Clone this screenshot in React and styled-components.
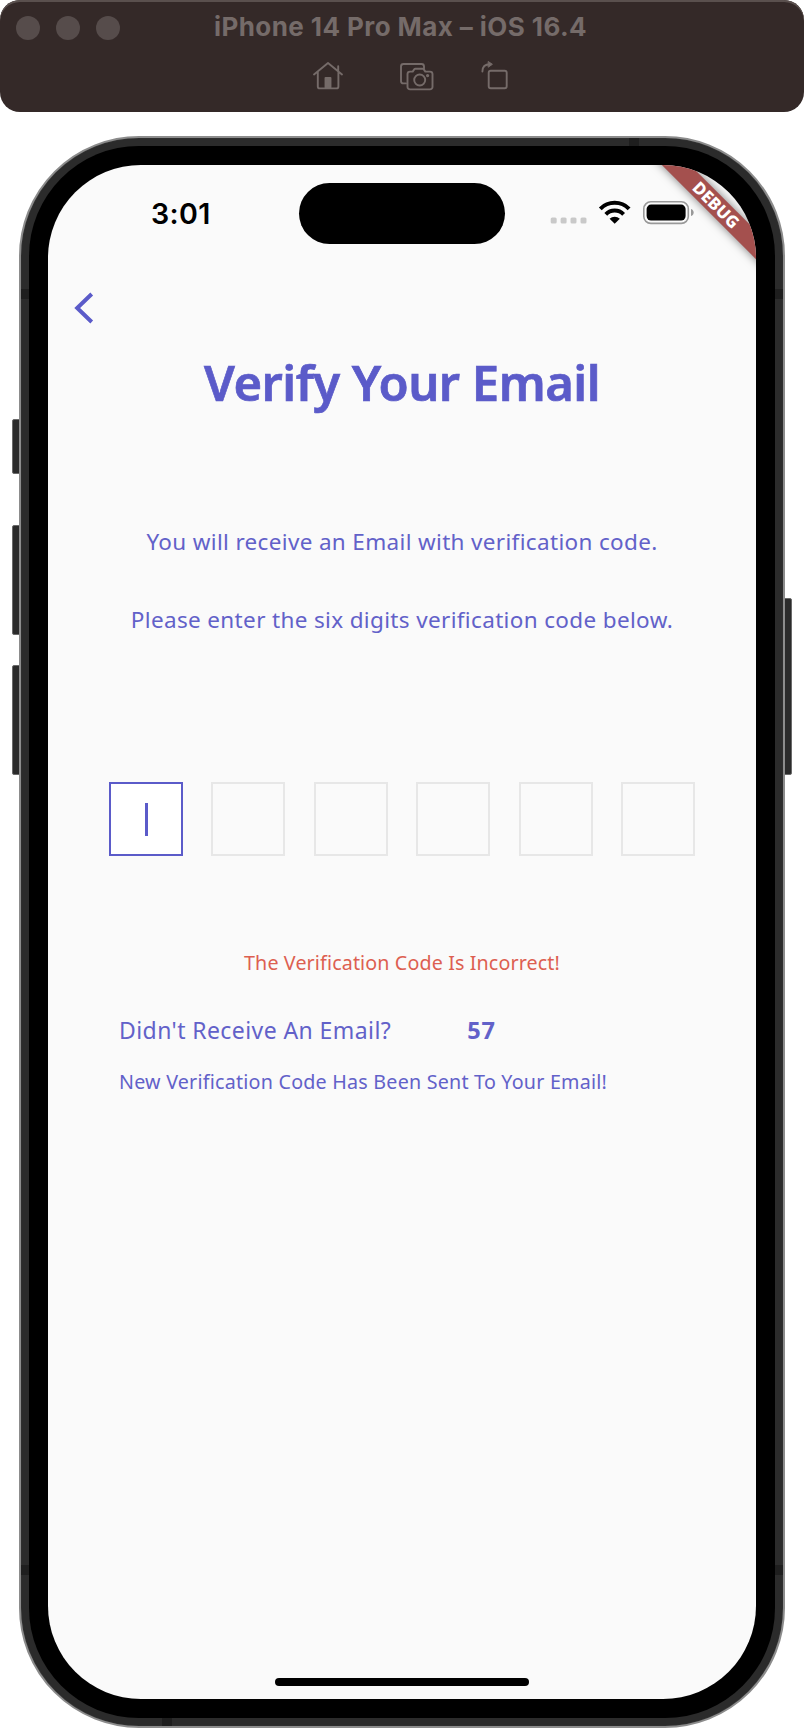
import React from "react";
import styled, { createGlobalStyle } from "styled-components";

const INK = "#5b5bc9";

const Global = createGlobalStyle`
  * { box-sizing: border-box; }
  body { margin: 0; background: #fff; }
`;

const Page = styled.div`
  width: 804px;
  height: 1732px;
  overflow: hidden;
  background: #fff;
`;

const WindowBar = styled.header`
  height: 112px;
  border-radius: 20px;
  background: #342928;
  box-shadow: inset 0 2px 0 #5a504e;
`;

const TitleRow = styled.div`
  display: grid;
  grid-template-columns: 198px 1fr 198px;
  align-items: center;
  height: 56px;
`;

const Lights = styled.div`
  display: flex;
  gap: 16px;
  padding-left: 16px;
`;

const Light = styled.span`
  width: 24px;
  height: 24px;
  border-radius: 50%;
  background: #564c4b;
`;

const WindowTitle = styled.div`
  height: 56px;
  padding-right: 3px;
  font: 700 26px/54px Inter, sans-serif;
  letter-spacing: 0.42px;
  text-align: center;
  white-space: nowrap;
  color: #756b69;
`;

const Tools = styled.div`
  display: flex;
  padding: 4px 0 0 312px;
`;

const ToolIcon = styled.svg`
  width: ${(p) => p.$w}px;
  height: 32px;
  margin-right: ${(p) => p.$after || 0}px;
  fill: none;
  stroke: #756b69;
  stroke-width: 1.9;
  stroke-linecap: round;
  stroke-linejoin: round;
`;

const Device = styled.main`
  position: relative;
  width: 766px;
  height: 1592px;
  margin: 24px auto 0;
`;

const SideButton = styled.span`
  position: absolute;
  top: ${(p) => p.$top}px;
  ${(p) => p.$side}: -7px;
  width: 9px;
  height: ${(p) => p.$height}px;
  border: 1px solid #6a6a6a;
  border-radius: 2px;
  background: #2b2b2b;
`;

const Frame = styled.div`
  position: relative;
  height: 1592px;
  padding: 8px;
  border: 2px solid #8c8c8c;
  border-radius: 120px;
  background: #2b2b2b;
  box-shadow: inset 0 0 1px #555;
`;

const Antenna = styled.span`
  position: absolute;
  left: ${(p) => p.$x}px;
  top: ${(p) => p.$y}px;
  width: 10px;
  height: 8px;
  background: #1e1e1e;
  ${(p) => p.$upright && "width: 8px; height: 10px;"}
`;

const Bezel = styled.div`
  height: 1572px;
  padding: 19px;
  border-radius: 110px;
  background: #000;
`;

const Screen = styled.div`
  position: relative;
  display: flex;
  flex-direction: column;
  height: 1534px;
  overflow: hidden;
  border-radius: 93px;
  background: #fafafa;
`;

const StatusBar = styled.div`
  display: flex;
  align-items: flex-start;
  height: 79px;
  padding-top: 18px;
`;

const Clock = styled.time`
  width: 251px;
  padding-left: 103px;
  font: 600 28.6px/61px Inter, sans-serif;
  letter-spacing: 0.4px;
  color: #000;
`;

const Island = styled.div`
  width: 206px;
  height: 61px;
  border-radius: 31px;
  background: #000;
`;

const StatusIcons = styled.svg`
  width: 150px;
  height: 30px;
  margin: 16px 0 0 42px;
`;

const Ribbon = styled.div`
  position: absolute;
  top: 29.6px;
  left: 568.4px;
  width: 200px;
  height: 20px;
  transform: rotate(45deg);
  background: #a4504e;
  box-shadow: 0 0 10px rgba(0, 0, 0, 0.5);
  font: 800 16.8px/20px "Noto Sans", sans-serif;
  text-align: center;
  color: #fff;
`;

const BackButton = styled.button`
  align-self: flex-start;
  width: 30px;
  height: 38px;
  margin: 45px 0 0 22px;
  padding: 0;
  border: 0;
  background: none;
  svg { display: block; }
`;

const Text = styled.p`
  height: ${(p) => p.$line}px;
  margin: ${(p) => p.$above || 0}px 0 0;
  font: 400 ${(p) => p.$size}px/${(p) => p.$line}px "Noto Sans", sans-serif;
  letter-spacing: ${(p) => p.$track}px;
  text-align: center;
  white-space: nowrap;
  color: ${(p) => p.$color || "#6261c9"};
`;

const Heading = styled(Text).attrs({ as: "h1" })`
  font-weight: 600;
  color: ${INK};
  -webkit-text-stroke: 0.7px ${INK};
`;

const CodeRow = styled.div`
  display: flex;
  justify-content: space-between;
  width: 586px;
  margin: 147px 0 94px 61px;
`;

const CodeCell = styled.div`
  display: flex;
  align-items: center;
  justify-content: center;
  width: 74px;
  height: 74px;
  border: 2px solid ${(p) => (p.$active ? INK : "#e7e7e7")};
  background: ${(p) => (p.$active ? "#fff" : "transparent")};
`;

const Caret = styled.span`
  width: 3px;
  height: 33px;
  background: ${INK};
`;

const ResendRow = styled.div`
  display: flex;
  margin: 39px 0 24px 71px;
`;

const Countdown = styled(Text)`
  margin-left: 76px;
  font-weight: 700;
`;

const Notice = styled(Text)`
  padding-left: 71px;
  text-align: left;
`;

const HomeIndicator = styled.div`
  width: 254px;
  height: 8px;
  margin: auto auto 13px;
  border-radius: 4px;
  background: #000;
`;

export default function App() {
  return (
    <Page>
      <Global />
      <WindowBar>
        <TitleRow>
          <Lights>
            <Light />
            <Light />
            <Light />
          </Lights>
          <WindowTitle>iPhone 14 Pro Max – iOS 16.4</WindowTitle>
        </TitleRow>
        <Tools>
          <ToolIcon $w={32} $after={55} viewBox="0 0 32 32">
            <path d="M2 14.5 16 3l14 11.5M5.8 12v14.400a2 2 0 0 0 2 2h16.600a2 2 0 0 0 2-2V12M26.200 11V6.200" />
            <path d="M13.500 18h5v9.500h-5z" fill="#756b69" />
          </ToolIcon>
          <ToolIcon $w={35} $after={46} viewBox="0 0 35 32">
            <path d="M7 23.400H4.500a2.500 2.500 0 0 1-2.500-2.500V6.500A2.500 2.500 0 0 1 4.500 4h18a2.500 2.500 0 0 1 2.500 2.500V8.500" />
            <path d="M11 11.600h2.700l1.500-2.200a1.500 1.500 0 0 1 1.200-.6h7.200a1.500 1.500 0 0 1 1.200.6l1.500 2.200H31a2.500 2.500 0 0 1 2.500 2.500v12.800a2.500 2.500 0 0 1-2.500 2.500H11a2.500 2.500 0 0 1-2.500-2.500V14.100a2.500 2.500 0 0 1 2.500-2.500z" />
            <circle cx="20.700" cy="20" r="5.500" />
            <circle cx="28.600" cy="15.600" r="0.700" fill="#756b69" />
          </ToolIcon>
          <ToolIcon $w={29} viewBox="0 0 29 32">
            <path d="M2.400 11.600C2.400 7 5 4.300 10 4.300" />
            <path d="M8.500 1.700 12.400 4.300 8.500 7z" fill="#756b69" strokeWidth="1" />
            <rect x="8.700" y="10.800" width="18" height="17.500" rx="2" />
          </ToolIcon>
        </Tools>
      </WindowBar>

      <Device>
        <SideButton $side="left" $top={283} $height={55} />
        <SideButton $side="left" $top={388.5} $height={110} />
        <SideButton $side="left" $top={528.5} $height={110} />
        <SideButton $side="right" $top={461.5} $height={177} />
        <Frame>
          <Antenna $upright $x={0} $y={151} />
          <Antenna $upright $x={754} $y={151} />
          <Antenna $upright $x={0} $y={1427} />
          <Antenna $upright $x={754} $y={1427} />
          <Antenna $x={608} $y={0} />
          <Antenna $x={141} $y={1580} />
          <Bezel>
            <Screen>
              <StatusBar>
                <Clock>3:01</Clock>
                <Island />
                <StatusIcons viewBox="0 0 150 30">
                  <g fill="#c9c9c9">
                    <rect x="3.700" y="18.600" width="6" height="6" rx="1.500" />
                    <rect x="13.600" y="18.600" width="6" height="6" rx="1.500" />
                    <rect x="23.500" y="18.600" width="6" height="6" rx="1.500" />
                    <rect x="33.500" y="18.600" width="6" height="6" rx="1.500" />
                  </g>
                  <g fill="none" stroke="#000" strokeWidth="4">
                    <path d="M53.300 9.800a20.300 20.300 0 0 1 28.800 0" />
                    <path d="M58.800 15.300a12.600 12.600 0 0 1 17.800 0" />
                  </g>
                  <path d="M62.600 19.800a7.200 7.200 0 0 1 10.200 0L67.700 24.800z" />
                  <rect x="96.800" y="2.800" width="44.500" height="21.600" rx="7" fill="none" stroke="#999" strokeWidth="1.600" />
                  <rect x="99.600" y="5.600" width="39" height="16" rx="4.500" />
                  <path d="M144 10c3.600 1 3.600 6 0 7z" fill="#999" />
                </StatusIcons>
              </StatusBar>
              <Ribbon>DEBUG</Ribbon>

              <BackButton aria-label="Back">
                <svg width="30" height="38" viewBox="0 0 30 38">
                  <path d="M21.700 5 7.200 19l14.500 14" fill="none" stroke={INK} strokeWidth="4" />
                </svg>
              </BackButton>
              <Heading $size={49} $line={60} $track={-0.52} $above={25}>Verify Your Email</Heading>
              <Text $size={22.5} $line={30} $track={0.34} $above={115}>
                You will receive an Email with verification code.
              </Text>
              <Text $size={22.5} $line={30} $track={0.35} $above={48}>
                Please enter the six digits verification code below.
              </Text>
              <CodeRow>
                <CodeCell $active>
                  <Caret />
                </CodeCell>
                <CodeCell />
                <CodeCell />
                <CodeCell />
                <CodeCell />
                <CodeCell />
              </CodeRow>
              <Text $size={19.7} $line={26} $track={0.12} $color="#dd5f51">
                The Verification Code Is Incorrect!
              </Text>
              <ResendRow>
                <Text $size={23} $line={30} $track={0.42}>Didn't Receive An Email?</Text>
                <Countdown $size={23.5} $line={30} $track={0.8}>57</Countdown>
              </ResendRow>
              <Notice $size={19.7} $line={26} $track={0.22}>
                New Verification Code Has Been Sent To Your Email!
              </Notice>
              <HomeIndicator />
            </Screen>
          </Bezel>
        </Frame>
      </Device>
    </Page>
  );
}
